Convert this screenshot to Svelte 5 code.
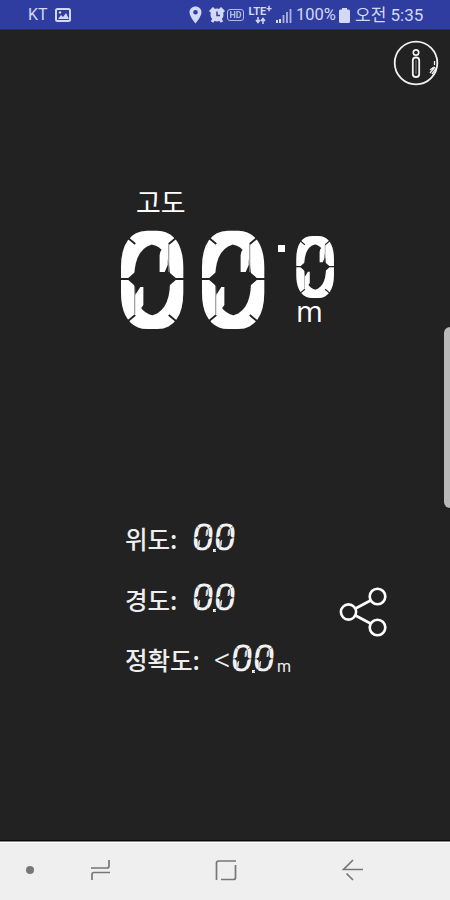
<script lang="ts">
  let altitude = $state({ whole: "00", fraction: "0" });
  let carrier = $state("KT");
  let battery = $state("100%");
  let clock = $state("오전 5:35");

  const readings = [
    { label: "위도:", value: "0.0", prefix: "", unit: "" },
    { label: "경도:", value: "0.0", prefix: "", unit: "" },
    { label: "정확도:", value: "0.0", prefix: "<", unit: "m" },
  ];
</script>

<!-- One LCD digit: the numeral, with the seams of the display over it -->
{#snippet lcdDigit(char: string, size: string)}
  <svg class="digit {size}" viewBox="0 0 65 99" preserveAspectRatio="none">
    <text class="numeral" x="32.5" y="92.5" text-anchor="middle">{char}</text>
    <path class="spark" d="M41 21L48 14V35L45 42H40V25Z M17 85L24 75V57H21L16 65V85Z" />
    <path class="notch" d="M17 41V57L8 49Z M48 41V57L57 49Z" />
    <path class="seam" d="M3 3L16 14M62 3L49 14M3 96L16 85M62 96L49 85M0 49H10M55 49H65" />
    <path class="seam thin" d="M49 14V42M15.500 57V84" />
  </svg>
{/snippet}

<div class="screen">
  <svg class="filters" width="0" height="0">
    <filter id="square-off" x="-20%" y="-20%" width="140%" height="140%">
      <feMorphology operator="dilate" radius="5" />
    </filter>
  </svg>

  <header class="status-bar">
    <span class="carrier">{carrier}</span>
    <svg class="photo" width="16" height="14" viewBox="0 0 16 14">
      <rect x="1" y="1" width="14" height="12" rx="1.500" fill="none" stroke="currentColor" stroke-width="2" />
      <path d="M3 11L6 7L8 9L11 5L14 11Z" fill="currentColor" />
      <circle cx="5" cy="4.500" r="1.200" fill="currentColor" />
    </svg>

    <div class="status-icons">
      <svg width="13" height="18" viewBox="0 0 13 18">
        <path
          d="M6.500 0.500C3 0.500 0.500 3 0.500 6.300C0.500 10.500 6.500 17.500 6.500 17.500S12.500 10.500 12.500 6.300C12.500 3 10 .5 6.500 .5ZM6.500 4A2.300 2.300 0 1 1 6.500 8.600A2.300 2.300 0 1 1 6.500 4Z"
          fill="currentColor"
        />
      </svg>
      <svg class="alarm" width="16" height="16" viewBox="0 0 16 16">
        <circle cx="8" cy="8" r="6.500" fill="currentColor" />
        <path d="M1 5L5 1M15 5L11 1M3 15L5 12M13 15L11 12" stroke="currentColor" stroke-width="3" />
        <path d="M8 4.500V8.500H11" fill="none" stroke="#303da0" stroke-width="1.500" />
      </svg>
      <span class="hd">HD</span>
      <span class="lte">
        <span class="lte-name">LTE<sup>+</sup></span>
        <svg width="11" height="7" viewBox="0 0 11 7">
          <path d="M3 0V5M1 3L3 5.500L5 3M8 7V2M6 4L8 1.500L10 4" fill="none" stroke="currentColor" stroke-width="1.500" />
        </svg>
      </span>
      <svg class="signal" width="16" height="15" viewBox="0 0 16 15">
        <path d="M1 15V12M4 15V11" stroke="currentColor" stroke-width="2" />
        <path d="M7.500 15V7M11 15V4M14.500 15V1" stroke="currentColor" stroke-width="1.800" opacity="0.75" />
      </svg>
      <span class="battery">{battery}</span>
      <svg class="cell" width="11" height="15" viewBox="0 0 11 15">
        <path d="M3 0H8V1.500H9.500Q11 1.500 11 3V13.500Q11 15 9.500 15H1.500Q0 15 0 13.500V3Q0 1.500 1.500 1.500H3Z" fill="currentColor" />
      </svg>
      <span class="clock">{clock}</span>
    </div>
  </header>

  <main class="content">
    <div class="toolbar">
      <svg width="46" height="46" viewBox="0 0 46 46" fill="none" stroke="#f2f2f2">
        <circle cx="23" cy="23" r="21.300" stroke-width="1.800" />
        <circle cx="23" cy="12.500" r="2.700" stroke-width="1.700" />
        <rect x="19.800" y="17.500" width="6.400" height="19.500" rx="3" stroke-width="1.800" />
        <path d="M23 20V34" stroke-width="0.800" opacity="0.6" />
        <path d="M41.500 21V25M42 27L37 33M43.500 28L39 34M37 30L41 27" stroke-width="1.300" />
      </svg>
    </div>

    <section class="altitude">
      <h1 class="altitude-label">고도</h1>
      <div class="altitude-value">
        {#each altitude.whole as char, index (index)}
          {@render lcdDigit(char, "large")}
        {/each}
        <span class="point"></span>
        <div class="fraction">
          {@render lcdDigit(altitude.fraction, "medium")}
          <span class="altitude-unit">m</span>
        </div>
      </div>
    </section>

    <section class="details">
      <div class="readings">
        {#each readings as reading (reading.label)}
          <div class="reading">
            <span class="reading-label">{reading.label}</span>
            {#if reading.prefix}
              <span class="prefix">{reading.prefix}</span>
            {/if}
            <span class="value">
              {#each reading.value as char, index (index)}
                {#if char === "."}
                  <span class="small-point"></span>
                {:else}
                  {@render lcdDigit(char, "small")}
                {/if}
              {/each}
            </span>
            {#if reading.unit}
              <span class="unit">{reading.unit}</span>
            {/if}
          </div>
        {/each}
      </div>
      <svg class="share" width="50" height="52" viewBox="0 0 50 52" fill="none" stroke="#fff" stroke-width="2.600">
        <circle cx="9.500" cy="26" r="7.600" />
        <circle cx="38.500" cy="10.500" r="7.800" />
        <circle cx="38.500" cy="41.500" r="7.800" />
        <path d="M16.500 22.500L31.500 14.500M16.500 29.500L31.500 37.500" />
      </svg>
    </section>

    <div class="edge-handle"></div>
  </main>

  <nav class="nav-bar">
    <span class="dot"></span>
    <svg class="recents" width="22" height="22" viewBox="0 0 22 22">
      <path d="M1 9H17Q19 9 19 7V1M20 13.500H4Q2 13.500 2 15.500V21" />
    </svg>
    <svg class="home" width="22" height="22" viewBox="0 0 22 22">
      <path d="M1.500 21V4Q1.500 2 3.500 2H21M20.500 6V18.500Q20.500 20.500 18.500 20.500H6" />
    </svg>
    <svg class="back" width="22" height="22" viewBox="0 0 22 22">
      <path d="M11 1L1.500 10.500H21M4.500 14.500L11 21" />
    </svg>
  </nav>
</div>

<style>
  :global(body) {
    margin: 0;
    background: #222;
  }

  .screen {
    width: 450px;
    height: 900px;
    display: flex;
    flex-direction: column;
    overflow: hidden;
    background: #222;
    color: #fff;
    font-family: Roboto, "Noto Sans CJK KR", sans-serif;
  }

  .filters {
    display: block;
    flex: none;
  }

  .status-bar {
    height: 30px;
    flex: none;
    box-sizing: border-box;
    display: flex;
    align-items: center;
    padding: 1px 25px 0 28px;
    background: #303da0;
    border-bottom: 1px solid #262c66;
    color: #d3d8f5;
    font-size: 17px;
    line-height: 28px;
    white-space: nowrap;
  }

  .carrier {
    width: 27px;
    font-size: 16px;
  }

  .status-icons {
    display: flex;
    align-items: center;
    margin-left: auto;
  }

  .alarm {
    margin-left: 7px;
  }

  .hd {
    margin-left: 2px;
    width: 15px;
    height: 10px;
    border: 1px solid currentColor;
    border-radius: 3px;
    font-size: 9px;
    font-weight: 700;
    line-height: 10px;
    text-align: center;
    opacity: 0.8;
  }

  .lte {
    display: flex;
    flex-direction: column;
    align-items: center;
    width: 26px;
    margin-left: 3px;
  }

  .lte-name {
    font-size: 11px;
    font-weight: 700;
    line-height: 10px;
  }

  .lte-name sup {
    font-size: 10px;
    line-height: 0;
    vertical-align: 3px;
  }

  .signal {
    margin-left: 3px;
  }

  .battery {
    width: 39px;
    margin-left: 4px;
    font-size: 16.500px;
  }

  .cell {
    margin-left: 4px;
  }

  .clock {
    width: 70px;
    margin-left: 5px;
  }

  .content {
    position: relative;
    flex: 1;
    display: flex;
    flex-direction: column;
    border-bottom: 2px solid #090909;
  }

  .toolbar {
    display: flex;
    justify-content: flex-end;
    height: 46px;
    padding: 10px 11px 0 0;
  }

  .altitude {
    height: 322px;
    padding: 99px 0 0 119px;
  }

  .altitude-label {
    margin: 0 0 0 17px;
    height: 45px;
    font-family: "Noto Sans CJK KR", sans-serif;
    font-size: 27px;
    font-weight: 400;
    line-height: 34px;
  }

  .altitude-value {
    display: flex;
    align-items: flex-start;
  }

  .digit {
    display: block;
    flex: none;
    overflow: visible;
  }

  .digit.large {
    width: 66px;
    height: 99px;
    margin-right: 15px;
  }

  .digit.medium {
    width: 40px;
    height: 62px;
  }

  .digit.small {
    width: 20px;
    height: 28px;
    margin-right: 1px;
    transform: skewX(-5deg);
  }

  .numeral {
    fill: #fff;
    font-family: Roboto, sans-serif;
    font-size: 121px;
    font-weight: 100;
    filter: url(#square-off);
  }

  .small .numeral {
    fill: #f2f2f2;
    font-size: 130px;
    font-weight: 400;
    filter: none;
  }

  .notch {
    fill: #222;
  }

  .seam {
    fill: none;
    stroke: #222;
    stroke-width: 1.800;
  }

  .seam.thin {
    stroke: #888;
    stroke-width: 1;
  }

  .small .seam.thin {
    stroke: none;
  }

  .spark {
    fill: #fff;
  }

  .small .spark {
    fill: #ccc;
  }

  .point {
    width: 7px;
    height: 7px;
    margin: 15px 10px 0 -3px;
    background: #fff;
  }

  .fraction {
    display: flex;
    flex-direction: column;
    padding-top: 6px;
  }

  .altitude-unit {
    padding: 2px 0 0 1px;
    font-family: "Open Sans", sans-serif;
    font-size: 29px;
    line-height: 22px;
  }

  .details {
    display: flex;
    padding: 2px 0 0 125px;
  }

  .readings {
    display: flex;
    flex-direction: column;
    width: 214px;
  }

  .reading {
    display: flex;
    align-items: center;
    height: 60.500px;
    color: #eee;
  }

  .reading-label {
    padding-right: 16px;
    font-family: "Noto Sans CJK KR", sans-serif;
    font-size: 24.500px;
    font-weight: 500;
    line-height: 36px;
  }

  .prefix {
    width: 18px;
    margin-left: -2px;
    font-size: 33px;
    font-weight: 300;
    line-height: 28px;
  }

  .value {
    display: flex;
    align-items: flex-end;
    margin-top: -3px;
  }

  .small-point {
    width: 3px;
    height: 3px;
    margin: 0 -1px 0 -1px;
    background: #eee;
  }

  .unit {
    margin: 14px 0 0 2px;
    font-size: 16px;
    line-height: 18px;
  }

  .share {
    margin-top: 77px;
  }

  /* Edge panel handle, laid over the right side of the screen */
  .edge-handle {
    position: absolute;
    top: 297px;
    right: 0;
    width: 6px;
    height: 181px;
    border-radius: 6px 0 0 6px;
    background: #b9b9b9;
  }

  .nav-bar {
    height: 58px;
    flex: none;
    box-sizing: border-box;
    display: flex;
    align-items: center;
    padding: 0 0 4px 26px;
    border-top: 1px solid #fff;
    background: #efefef;
    box-shadow: 0 -1px 0 #888;
    z-index: 1;
  }

  .nav-bar svg {
    fill: none;
    stroke: #777;
    stroke-width: 1.700;
  }

  .dot {
    width: 8px;
    height: 8px;
    border-radius: 50%;
    background: #777;
  }

  .recents {
    margin-left: 56px;
  }

  .home {
    margin-left: 103px;
  }

  .back {
    margin-left: 105px;
  }
</style>
